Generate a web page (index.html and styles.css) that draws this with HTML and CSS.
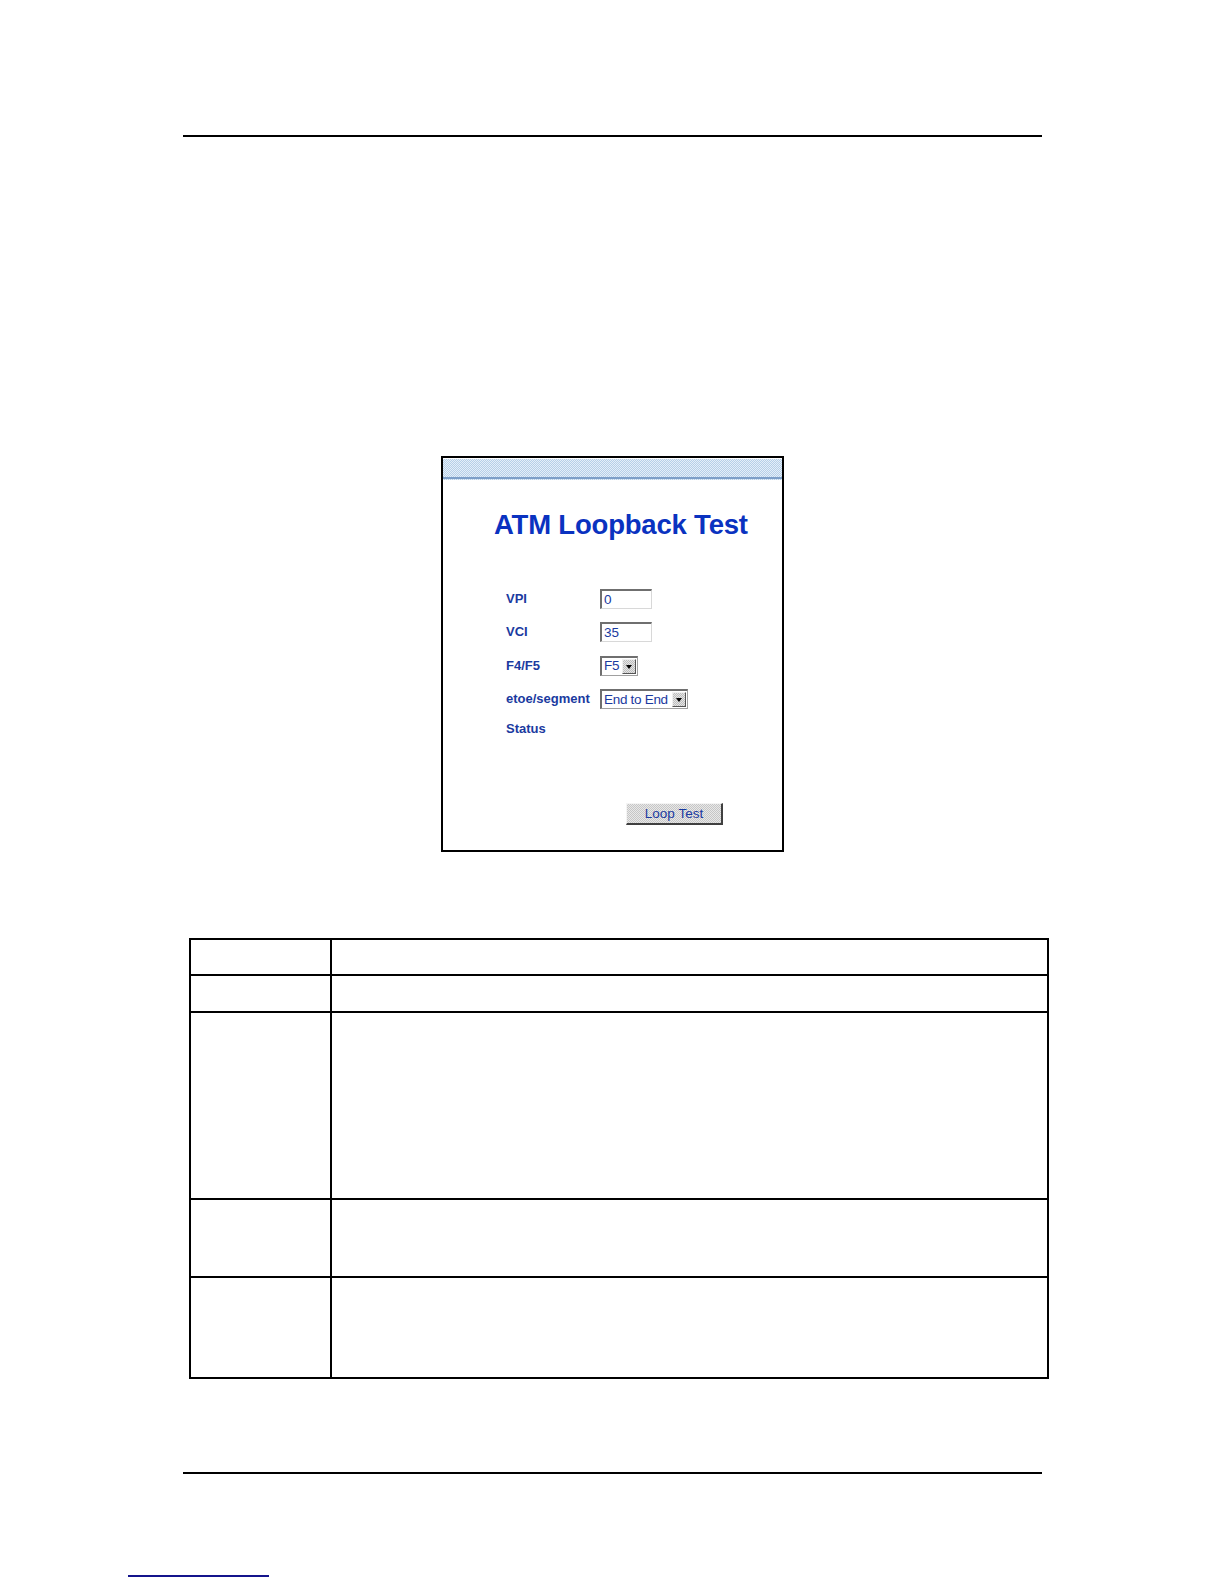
FILE: index.html
```html
<!DOCTYPE html>
<html>
<head>
<meta charset="utf-8">
<link rel="stylesheet" href="styles.css">
</head>
<body>
<div class="page">
  <div class="rule rule-top"></div>

  <div class="shot">
    <div class="band"></div>
    <h1 class="title">ATM Loopback Test</h1>
    <div class="form">
      <div class="row">
        <span class="label">VPI</span>
        <span class="field w52">0</span>
      </div>
      <div class="row">
        <span class="label">VCI</span>
        <span class="field w52">35</span>
      </div>
      <div class="row">
        <span class="label">F4/F5</span>
        <span class="select w38"><span class="val">F5</span><span class="arrow"></span></span>
      </div>
      <div class="row">
        <span class="label">etoe/segment</span>
        <span class="select w88"><span class="val">End to End</span><span class="arrow"></span></span>
      </div>
      <div class="row row-status">
        <span class="label">Status</span>
      </div>
    </div>
    <div class="actions">
      <span class="btn">Loop Test</span>
    </div>
  </div>

  <table class="grid">
    <tr class="r1"><td class="c1"></td><td></td></tr>
    <tr class="r2"><td class="c1"></td><td></td></tr>
    <tr class="r3"><td class="c1"></td><td></td></tr>
    <tr class="r4"><td class="c1"></td><td></td></tr>
    <tr class="r5"><td class="c1"></td><td></td></tr>
  </table>

  <div class="rule rule-bottom"></div>

  <div class="footlink"></div>
</div>
</body>
</html>
```

FILE: styles.css
```css
html, body {
  margin: 0;
  padding: 0;
  background: #ffffff;
  font-family: "Liberation Sans", Arial, sans-serif;
}

.page {
  width: 1224px;
  height: 1584px;
  padding-top: 135px;
  box-sizing: border-box;
  position: relative;
}

.rule {
  height: 2px;
  background: #000;
  margin-left: 183px;
  width: 859px;
}

.shot {
  margin-top: 319px;
  margin-left: 441px;
  width: 343px;
  height: 396px;
  box-sizing: border-box;
  border: 2px solid #000;
  display: flex;
  flex-direction: column;
}

.band {
  height: 21px;
  margin-top: 1px;
  background:
    linear-gradient(to bottom, transparent 0, transparent 18px, #7d9fc8 18px, #7d9fc8 20px, transparent 20px),
    repeating-conic-gradient(#b6cfe8 0 25%, #e4eff9 0 50%) 0 0 / 2px 2px;
}

.title {
  margin: 29px 0 0 51px;
  font-size: 27.5px;
  line-height: 32px;
  font-weight: bold;
  color: #0a32c0;
  letter-spacing: -0.2px;
}

.form {
  margin-top: 48px;
  margin-left: 63px;
  display: flex;
  flex-direction: column;
}

.row {
  display: flex;
  align-items: flex-start;
  height: 33.4px;
}

.row-status {
  height: 20px;
  margin-top: -4px;
}

.row .label {
  width: 94px;
  font-size: 13px;
  font-weight: bold;
  color: #1a3aa0;
  line-height: 20px;
}

.field, .select {
  display: inline-flex;
  align-items: center;
  height: 20px;
  box-sizing: border-box;
  border-top: 2px solid #6f6f6f;
  border-left: 2px solid #6f6f6f;
  border-right: 1px solid #d8d8d8;
  border-bottom: 1px solid #d8d8d8;
  background: #fff;
  font-size: 13.5px;
  color: #1a3aa0;
  padding-left: 2px;
}

.w52 { width: 52px; }
.w38 { width: 38px; }
.w88 { width: 88px; }

.select {
  justify-content: space-between;
  padding-right: 1px;
  border-right: 1px solid #a0a0a0;
  border-bottom: 1px solid #a0a0a0;
}

.select .val {
  line-height: 16px;
  letter-spacing: -0.3px;
}

.arrow {
  width: 14px;
  height: 15px;
  box-sizing: border-box;
  background: repeating-conic-gradient(#bdbdbd 0 25%, #e6e6e6 0 50%) 0 0 / 2px 2px;
  border-right: 1px solid #555;
  border-bottom: 1px solid #555;
  border-top: 1px solid #f0f0f0;
  border-left: 1px solid #f0f0f0;
  position: relative;
}

.arrow::after {
  content: "";
  position: absolute;
  left: 3px;
  top: 5px;
  border-left: 3.5px solid transparent;
  border-right: 3.5px solid transparent;
  border-top: 4px solid #000;
}

.actions {
  margin-top: 64px;
  margin-left: 183px;
  display: flex;
}

.btn {
  width: 97px;
  height: 22px;
  box-sizing: border-box;
  display: flex;
  align-items: center;
  justify-content: center;
  font-size: 13.5px;
  color: #1a3aa0;
  background: repeating-conic-gradient(#c6c6c6 0 25%, #e8e8e8 0 50%) 0 0 / 2px 2px;
  border-top: 1px solid #f4f4f4;
  border-left: 1px solid #f4f4f4;
  border-right: 2px solid #404040;
  border-bottom: 2px solid #404040;
}

.grid {
  margin-top: 86px;
  margin-left: 189px;
  width: 860px;
  border-collapse: collapse;
  table-layout: fixed;
}

.grid td {
  border: 2px solid #000;
  padding: 0;
}

.grid .c1 { width: 139px; }
.grid .r1 td { height: 34px; }
.grid .r2 td { height: 35px; }
.grid .r3 td { height: 185px; }
.grid .r4 td { height: 76px; }
.grid .r5 td { height: 99px; }

.rule-bottom {
  margin-top: 93px;
}

.footlink {
  margin-top: 101px;
  margin-left: 128px;
  width: 141px;
  height: 2px;
  background: #14148c;
}
```
